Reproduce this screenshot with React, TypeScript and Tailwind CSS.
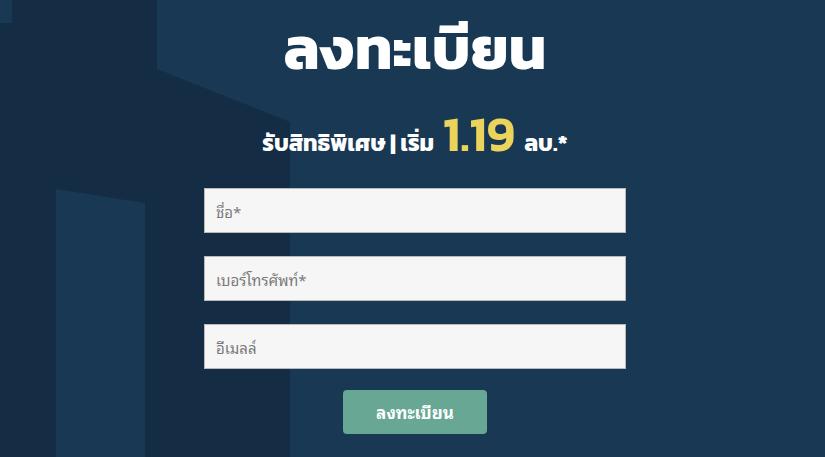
import React from "react";

const thai = { fontFamily: "'Kanit','Noto Sans Thai','Noto Sans','Noto Sans CJK SC',sans-serif" };
const thaiLooped = { fontFamily: "'Noto Sans Thai Looped','Tahoma','Noto Sans','DejaVu Sans',sans-serif" };

function Background() {
  return (
    <svg className="absolute inset-0 h-full w-full" viewBox="0 0 825 457" preserveAspectRatio="none">
      <rect x="0" y="0" width="825" height="457" fill="#183853" />
      <polygon points="12,0 157,0 157,69 290,122 290,457 0,457 0,23 12,23" fill="#152c45" />
      <polygon points="56,189 145,203 145,457 56,457" fill="#183853" />
    </svg>
  );
}

function Field({ placeholder }: { placeholder: string }) {
  return (
    <input
      type="text"
      placeholder={placeholder}
      style={thaiLooped}
      className="h-[45px] w-[422px] border border-[#b9b9b9] bg-[#f6f6f6] px-[11px] text-[15px] text-[#555] placeholder:text-[#7a7a7a] outline-none"
    />
  );
}

export default function App() {
  return (
    <div className="relative h-[457px] w-[825px] overflow-hidden bg-[#183853]">
      <Background />
      <div className="relative flex flex-col items-center pl-[5px]">
        <h1 style={thai} className="mt-[6px] text-[60px] font-bold leading-[84px] text-white">ลงทะเบียน</h1>
        <div style={thai} className="mt-[24px] flex items-baseline gap-[9px] text-[23px] font-bold text-white leading-[40px]">
          <span>รับสิทธิพิเศษ&nbsp;|&nbsp;เริ่ม</span>
          <span className="text-[49px] font-semibold text-[#ecd35b]">1.19</span>
          <span>ลบ.*</span>
        </div>
        <div className="mt-[25px] flex flex-col gap-[23px]">
          <Field placeholder="ชื่อ*" />
          <Field placeholder="เบอร์โทรศัพท์*" />
          <Field placeholder="อีเมลล์" />
        </div>
        <button
          style={thaiLooped}
          className="mt-[21px] h-[44px] w-[144px] rounded-[4px] bg-[#67a794] text-[17px] font-bold text-white"
        >
          ลงทะเบียน
        </button>
      </div>
    </div>
  );
}
